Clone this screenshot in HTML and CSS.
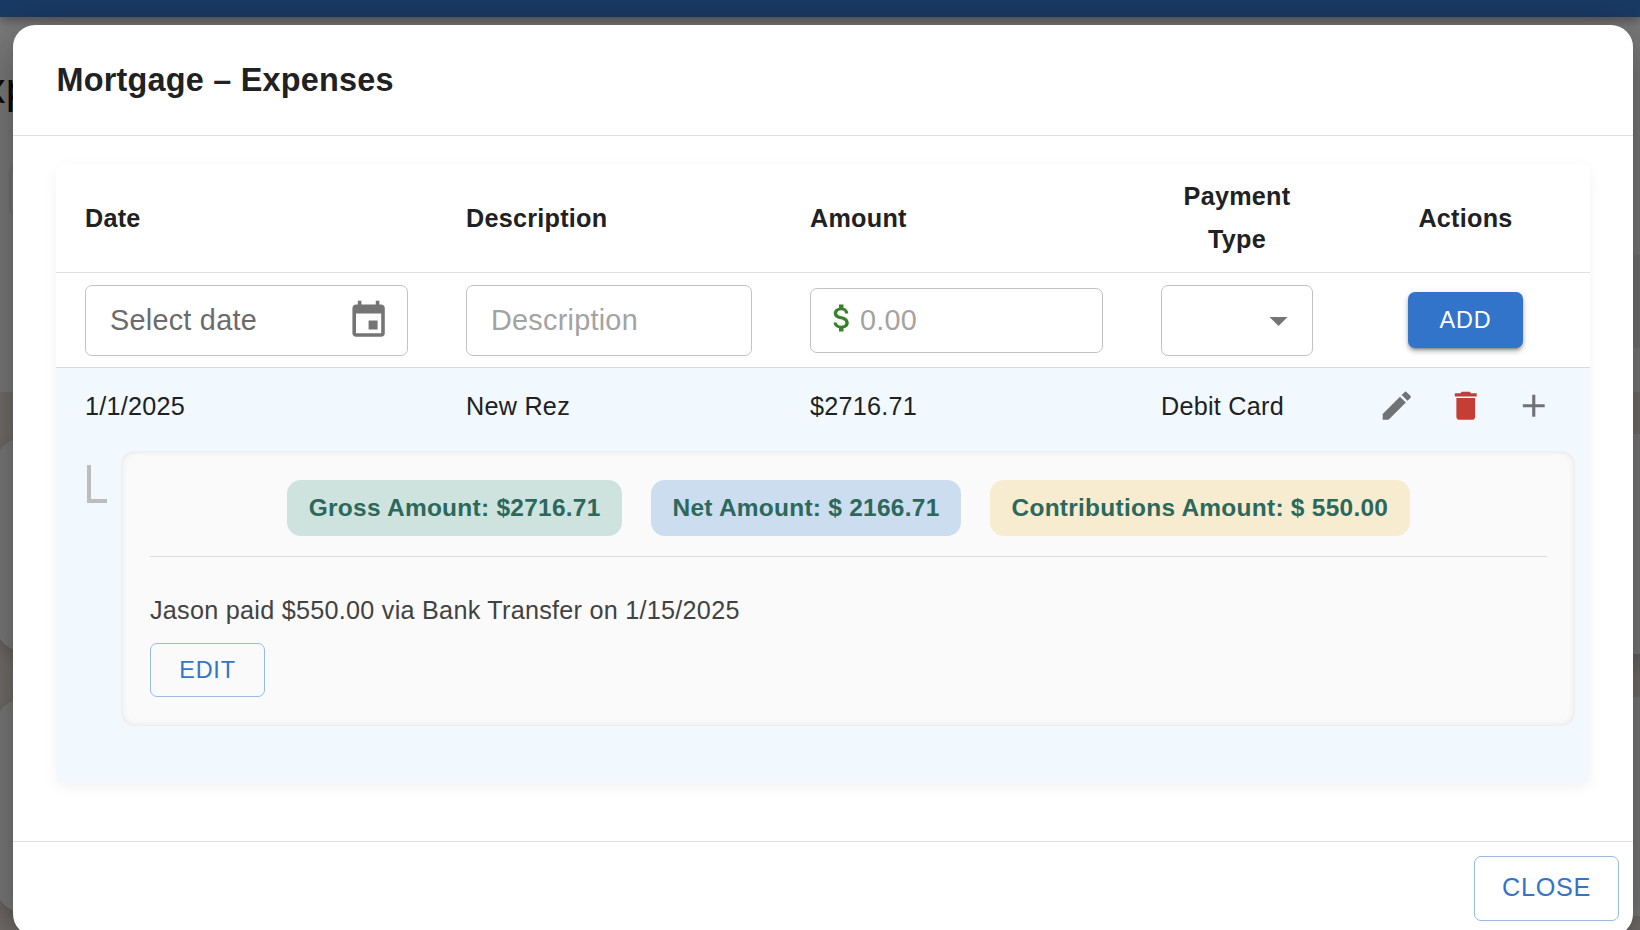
FILE: index.html
```html
<!DOCTYPE html>
<html lang="en">
<head>
<meta charset="utf-8">
<title>Mortgage – Expenses</title>
<link rel="stylesheet" href="styles.css">
</head>
<body>
<div class="page">
  <div class="page-bar"></div>
  <div class="page-heading">xp</div>
  <div class="page-field"></div>
  <div class="page-band">
    <div class="page-card"></div>
    <div class="page-card"></div>
  </div>
  <div class="side side-one"></div>
  <div class="side side-two"></div>
  <div class="side side-three"></div>
  <div class="side side-four"></div>
</div>

<div class="overlay">
  <section class="dialog" role="dialog">
    <h2 class="dialog-title">Mortgage – Expenses</h2>
    <div class="dialog-content">
      <div class="table">
        <div class="row row-head">
          <div class="cell cell-single">Date</div>
          <div class="cell cell-single">Description</div>
          <div class="cell cell-single">Amount</div>
          <div class="cell cell-center">Payment Type</div>
          <div class="cell cell-center cell-single">Actions</div>
        </div>
        <div class="row row-form">
          <div class="cell">
            <div class="field field-date"><span>Select date</span>
              <svg class="icon-calendar" viewBox="0 0 24 24"><path d="M17 12h-5v5h5v-5zM16 1v2H8V1H6v2H5c-1.11 0-1.99.9-1.99 2L3 19c0 1.1.89 2 2 2h14c1.1 0 2-.9 2-2V5c0-1.1-.9-2-2-2h-1V1h-2zm3 18H5V8h14v11z"/></svg>
            </div>
          </div>
          <div class="cell"><div class="field placeholder">Description</div></div>
          <div class="cell">
            <div class="field field-amount placeholder">
              <svg class="icon-dollar" viewBox="0 0 24 24"><path d="M11.800 10.900c-2.270-.590-3-1.200-3-2.150 0-1.090 1.010-1.850 2.700-1.850 1.780 0 2.440.850 2.500 2.100h2.210c-.070-1.720-1.120-3.300-3.210-3.810V3h-3v2.160c-1.940.420-3.500 1.680-3.500 3.610 0 2.310 1.910 3.460 4.700 4.130 2.500.600 3 1.480 3 2.410 0 .690-.490 1.790-2.700 1.790-2.060 0-2.870-.920-2.980-2.100h-2.200c.120 2.190 1.760 3.420 3.680 3.830V21h3v-2.150c1.950-.370 3.500-1.500 3.500-3.550 0-2.840-2.430-3.810-4.700-4.400z"/></svg>
              <span>0.00</span>
            </div>
          </div>
          <div class="cell">
            <div class="field field-select"><svg class="icon-arrow" viewBox="0 0 24 24"><path d="M7 10l5 5 5-5z"/></svg></div>
          </div>
          <div class="cell cell-center"><button class="btn btn-add">ADD</button></div>
        </div>
        <div class="row row-data">
          <div class="cell">1/1/2025</div>
          <div class="cell">New Rez</div>
          <div class="cell">$2716.71</div>
          <div class="cell">Debit Card</div>
          <div class="cell cell-center actions">
            <svg class="icon-action" viewBox="0 0 24 24"><path d="M3 17.250V21h3.750L17.810 9.940l-3.750-3.750L3 17.250zM20.710 7.040c.390-.390.390-1.020 0-1.410l-2.340-2.340a.996.996 0 0 0-1.410 0l-1.830 1.830 3.750 3.750 1.830-1.830z"/></svg>
            <svg class="icon-action icon-delete" viewBox="0 0 24 24"><path d="M6 19c0 1.100.900 2 2 2h8c1.100 0 2-.900 2-2V7H6v12zM19 4h-3.500l-1-1h-5l-1 1H5v2h14V4z"/></svg>
            <svg class="icon-action" viewBox="0 0 24 24"><path d="M19 13h-6v6h-2v-6H5v-2h6V5h2v6h6v2z"/></svg>
          </div>
        </div>
        <div class="detail">
          <div class="branch"></div>
          <div class="panel">
            <div class="pills">
              <span class="pill pill-gross">Gross Amount: $2716.71</span>
              <span class="pill pill-net">Net Amount: $ 2166.71</span>
              <span class="pill pill-contrib">Contributions Amount: $ 550.00</span>
            </div>
            <p class="payment">Jason paid $550.00 via Bank Transfer on 1/15/2025</p>
            <button class="btn btn-edit">EDIT</button>
          </div>
        </div>
      </div>
    </div>
    <footer class="dialog-actions"><button class="btn btn-close">CLOSE</button></footer>
  </section>
</div>
</body>
</html>
```
FILE: styles.css
```css
* { box-sizing: border-box; }

body {
  margin: 0;
  height: 930px;
  overflow: hidden;
  font-family: "Liberation Sans", Arial, Helvetica, sans-serif;
  color: #202122;
  font-size: 25.2px;
  letter-spacing: 0.26px;
}

/* Dimmed page behind the dialog */
.page {
  position: absolute;
  inset: 0;
  overflow: hidden;
  background: #7c7c7c;
}
.page-bar {
  height: 17px;
  background: #1a3b66;
  box-shadow: 0 4px 8px rgba(0, 0, 0, 0.3);
}
.page-heading {
  position: absolute;
  right: 1610px;
  top: 63px;
  font-size: 43px;
  line-height: 50px;
  color: #0c0c0c;
}
.page-field {
  position: absolute;
  left: 9px;
  top: 160px;
  width: 200px;
  height: 60px;
  border: 2px solid #757575;
  border-radius: 14px;
}
.page-band {
  position: absolute;
  left: 0;
  right: 0;
  top: 392px;
  bottom: 0;
  padding-top: 45px;
  display: flex;
  flex-direction: column;
  gap: 46px;
  background: #75706d;
}
.page-card {
  height: 215px;
  margin-left: -4px;
  flex: none;
  border-radius: 28px;
  background: #7c7c7c;
  box-shadow: 0 6px 16px rgba(0, 0, 0, 0.16);
}
.side {
  position: absolute;
  right: 0;
  width: 20px;
}
.side-one { top: 255px; height: 93px; background: #747474; }
.side-two { top: 434px; height: 220px; background: #7c7c7c; }
.side-three { top: 654px; height: 43px; background: linear-gradient(#656565, #75706e 55%); }
.side-four { top: 697px; height: 219px; background: #7c7c7c; }

/* Dialog */
.overlay {
  position: absolute;
  inset: 0;
  padding: 25px 7px 0 13px;
  overflow: hidden;
}
.dialog {
  height: 911px;
  display: flex;
  flex-direction: column;
  background: #fff;
  border-radius: 22px;
  box-shadow: 0 20px 27px -12px rgba(0, 0, 0, 0.2), 0 10px 50px 4px rgba(0, 0, 0, 0.2), 0 16px 60px 14px rgba(0, 0, 0, 0.1);
}
.dialog-title {
  margin: 0;
  height: 110px;
  padding: 0 43.500px;
  display: flex;
  align-items: center;
  font-size: 32.4px;
  font-weight: 700;
  letter-spacing: 0.22px;
}
.dialog-content {
  height: 707px;
  padding: 28px 43px 0;
  border-top: 1px solid #e0e0e0;
  border-bottom: 1px solid #e0e0e0;
}

/* Expense table */
.table {
  height: 619px;
  border-radius: 8px;
  overflow: hidden;
  display: flex;
  flex-direction: column;
  box-shadow: 0 4px 14px rgba(0, 0, 0, 0.055);
}
.row {
  display: grid;
  grid-template-columns: 381px 344px 351px 210px 247px;
  align-items: center;
  flex: none;
}
.cell { padding: 0 29px; }
.cell-center { text-align: center; display: flex; justify-content: center; }
.cell-single { padding-top: 1px; }
.row-head {
  height: 109px;
  border-bottom: 1px solid #e0e0e0;
  font-weight: 700;
  line-height: 43.2px;
}
.row-form { height: 95px; border-bottom: 1px solid #d8dadb; }
.row-data { height: 78px; padding-bottom: 3px; background: #f1f8fe; line-height: 36px; }

.field {
  height: 71px;
  padding: 0 24px;
  display: flex;
  align-items: center;
  border: 1px solid #c2c2c2;
  border-radius: 7px;
  font-size: 28.8px;
}
.placeholder { color: #a3a3a3; }
.field-date { padding-right: 17px; justify-content: space-between; color: #6b6b6b; }
.field-amount { height: 65px; padding: 0 13px; }
.field-select { padding: 0 12px; justify-content: flex-end; }

.icon-calendar, .icon-arrow { width: 43.2px; height: 43.2px; margin-top: 1px; fill: #757575; }
.icon-dollar { width: 36px; height: 36px; margin-bottom: 5px; fill: #38802a; }

.btn {
  font: inherit;
  font-size: 23.4px;
  letter-spacing: 0.8px;
  padding: 0;
  border: 1px solid #99bae5;
  border-radius: 7px;
  background: transparent;
  color: #3374cb;
}
.btn-add {
  width: 115px;
  height: 56px;
  border: 0;
  color: #fff;
  background: #3374cb;
  box-shadow: 0 5px 2px -4px rgba(0, 0, 0, 0.2), 0 4px 4px rgba(0, 0, 0, 0.14), 0 2px 9px rgba(0, 0, 0, 0.12), 0 2px 3px rgba(0, 0, 0, 0.16);
}

.actions { padding: 0; gap: 31px; }
.icon-action { width: 37.5px; height: 37.5px; fill: #6f7376; }
.icon-delete { fill: #c43e36; }

/* Expanded contributions */
.detail {
  flex: 1;
  display: flex;
  align-items: flex-start;
  gap: 14px;
  padding: 5px 15px 0 31px;
  background: #f1f8fe;
}
.branch {
  width: 20px;
  height: 38px;
  margin-top: 14px;
  border-left: 4px solid #bdbdbd;
  border-bottom: 4px solid #bdbdbd;
}
.panel {
  flex: 1;
  height: 275px;
  padding: 29px 28px 0 29px;
  border-radius: 14px;
  background: #fafafa;
  box-shadow: inset 0 0 7px rgba(0, 0, 0, 0.1);
}
.pills {
  display: flex;
  justify-content: center;
  gap: 28.8px;
  padding-bottom: 20px;
  border-bottom: 1px solid #dcdcdc;
}
.pill {
  height: 56px;
  padding: 0 21.6px;
  display: flex;
  align-items: center;
  border-radius: 14px;
  font-size: 24.48px;
  font-weight: 700;
  white-space: nowrap;
  color: #2c685c;
}
.pill-gross { background: #cee3de; }
.pill-net { background: #cbddee; }
.pill-contrib { background: #f8ecd0; }
.payment { margin: 35px 0 15px; line-height: 36px; color: #424242; }
.btn-edit { width: 115px; height: 54px; }

.dialog-actions {
  display: flex;
  justify-content: flex-end;
  padding: 14px 14px 0;
}
.btn-close {
  width: 145px;
  height: 65px;
  padding-bottom: 2px;
  font-size: 25.2px;
  letter-spacing: 0.72px;
}
```
